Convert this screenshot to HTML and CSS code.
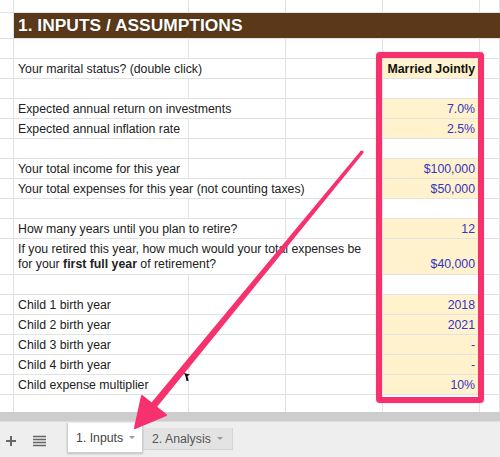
FILE: index.html
```html
<!DOCTYPE html>
<html>
<head>
<meta charset="utf-8">
<link rel="stylesheet" href="styles.css">
</head>
<body>
<div class="page">
  <div class="sheet">
    <div class="row r-top"><div class="c"></div><div class="c"></div><div class="c"></div><div class="c"></div><div class="c"></div><div class="c"></div></div>
    <div class="row r-head"><div class="c"></div><div class="c title">1. INPUTS / ASSUMPTIONS</div></div>

    <div class="row"><div class="c"></div><div class="c"></div><div class="c"></div><div class="c"></div><div class="c"></div><div class="c"></div></div>
    <div class="row"><div class="c"></div><div class="c lbl s2">Your marital status? (double click)</div><div class="c"></div><div class="c inp val bold">Married Jointly</div><div class="c"></div></div>
    <div class="row"><div class="c"></div><div class="c"></div><div class="c"></div><div class="c"></div><div class="c"></div><div class="c"></div></div>
    <div class="row"><div class="c"></div><div class="c lbl s2">Expected annual return on investments</div><div class="c"></div><div class="c inp val">7.0%</div><div class="c"></div></div>
    <div class="row"><div class="c"></div><div class="c lbl">Expected annual inflation rate</div><div class="c"></div><div class="c"></div><div class="c inp val">2.5%</div><div class="c"></div></div>
    <div class="row"><div class="c"></div><div class="c"></div><div class="c"></div><div class="c"></div><div class="c"></div><div class="c"></div></div>
    <div class="row"><div class="c"></div><div class="c lbl">Your total income for this year</div><div class="c"></div><div class="c"></div><div class="c inp val">$100,000</div><div class="c"></div></div>
    <div class="row"><div class="c"></div><div class="c lbl s3">Your total expenses for this year (not counting taxes)</div><div class="c inp val">$50,000</div><div class="c"></div></div>
    <div class="row"><div class="c"></div><div class="c"></div><div class="c"></div><div class="c"></div><div class="c"></div><div class="c"></div></div>
    <div class="row"><div class="c"></div><div class="c lbl s2">How many years until you plan to retire?</div><div class="c"></div><div class="c inp val">12</div><div class="c"></div></div>
    <div class="row r-tall"><div class="c"></div><div class="c lbl s3 wrap"><span class="lines">If you retired this year, how much would your total expenses be<br>for your <b>first full year</b> of retirement?</span></div><div class="c inp val bottom">$40,000</div><div class="c"></div></div>
    <div class="row"><div class="c"></div><div class="c"></div><div class="c"></div><div class="c"></div><div class="c"></div><div class="c"></div></div>
    <div class="row"><div class="c"></div><div class="c lbl">Child 1 birth year</div><div class="c"></div><div class="c"></div><div class="c inp val">2018</div><div class="c"></div></div>
    <div class="row"><div class="c"></div><div class="c lbl">Child 2 birth year</div><div class="c"></div><div class="c"></div><div class="c inp val">2021</div><div class="c"></div></div>
    <div class="row"><div class="c"></div><div class="c lbl">Child 3 birth year</div><div class="c"></div><div class="c"></div><div class="c inp val">-</div><div class="c"></div></div>
    <div class="row"><div class="c"></div><div class="c lbl">Child 4 birth year</div><div class="c"></div><div class="c"></div><div class="c inp val">-</div><div class="c"></div></div>
    <div class="row"><div class="c"></div><div class="c lbl">Child expense multiplier</div><div class="c"></div><div class="c"></div><div class="c inp val">10%</div><div class="c"></div></div>
    <div class="row r-part"><div class="c"></div><div class="c"></div><div class="c"></div><div class="c"></div><div class="c"></div><div class="c"></div></div>
  </div>

  <div class="hscroll"></div>

  <div class="tabbar">
    <div class="tool">
      <svg width="12" height="12" viewBox="0 0 12 12"><path d="M6 1v10M1 6h10" stroke="#666" stroke-width="2"/></svg>
    </div>
    <div class="tool menu">
      <svg width="13" height="12" viewBox="0 0 13 12"><path d="M0 1.5h13M0 4.5h13M0 7.5h13M0 10.5h13" stroke="#666" stroke-width="1.6"/></svg>
    </div>
    <div class="tab active"><span>1. Inputs</span><span class="caret"></span></div>
    <div class="tab other"><span>2. Analysis</span><span class="caret"></span></div>
  </div>

  <div class="highlight"></div>

  <svg class="overlay" width="500" height="457" viewBox="0 0 500 457">
    <polygon points="363.2,153.2 360.8,150.8 151.3,402.8 156.7,407.2" fill="#f7306e"/>
    <circle cx="362" cy="152" r="1.6" fill="#f7306e"/>
    <polygon points="135,428 142,396 166,415" fill="#f7306e" stroke="#f7306e" stroke-width="2" stroke-linejoin="round"/>
    <polygon points="184,373 190,374.5 187.5,376 188.5,381 186.5,381 185.5,376.5" fill="#111"/>
  </svg>
</div>
</body>
</html>
```

FILE: styles.css
```css
html, body {
  margin: 0;
  padding: 0;
  background: #fff;
}

.page {
  position: relative;
  width: 500px;
  height: 457px;
  overflow: hidden;
  font-family: "Liberation Sans", Arial, sans-serif;
  font-size: 12.3px;
  color: #222;
}

.sheet {
  display: flex;
  flex-direction: column;
}

.row {
  display: grid;
  grid-template-columns: 14px 175px 97px 97px 97px 20px;
  height: 20px;
}

.r-top { height: 13px; }
.r-head { height: 26px; }
.r-tall { height: 36px; }
.r-part { height: 17px; }
.r-part .c { border-bottom: none; }

.c {
  box-sizing: border-box;
  border-right: 1px solid #e2e2e2;
  border-bottom: 1px solid #e2e2e2;
  display: flex;
  align-items: center;
  padding: 0 4px;
  white-space: nowrap;
  overflow: hidden;
}

.title {
  grid-column: 2 / -1;
  background: #5a3818;
  border-right: none;
  color: #fff;
  font-weight: bold;
  font-size: 17.4px;
  padding-left: 4px;
  text-shadow: 0 0 1px rgba(0,0,0,0.5);
}

.s2 { grid-column: span 2; }
.s3 { grid-column: span 3; }

.wrap .lines {
  display: block;
  line-height: 15px;
  white-space: nowrap;
}

.inp { background: #fff2cc; }

.val {
  justify-content: flex-end;
  color: #3434c4;
}

.bold {
  font-weight: bold;
  color: #111;
}

.bottom {
  align-items: flex-end;
  padding-bottom: 3px;
}

.hscroll {
  height: 10px;
  background: #cdcdcd;
  border-bottom: 1px solid #dcdcdc;
  box-sizing: border-box;
}

.tabbar {
  height: 35px;
  background: #eeeeee;
  display: flex;
  align-items: flex-start;
  padding-left: 5px;
}

.tool {
  width: 12px;
  height: 12px;
  margin-top: 13px;
  display: flex;
}

.menu {
  margin-left: 16px;
  width: 13px;
}

.tab {
  display: flex;
  align-items: center;
  box-sizing: border-box;
  color: #444;
  font-size: 12.3px;
}

.active {
  margin-left: 21px;
  margin-top: 1px;
  width: 76px;
  height: 30px;
  padding-left: 8px;
  background: #fff;
  border: 1px solid #cfcfcf;
  border-top: none;
  box-shadow: 0 1px 2px rgba(0,0,0,0.2);
}

.other {
  margin-top: 6px;
  width: 90px;
  height: 22px;
  padding-left: 8px;
  background: #e3e3e3;
  border: 1px solid #d4d4d4;
  border-top: none;
  color: #555;
}

.caret {
  width: 0;
  height: 0;
  border-left: 3.5px solid transparent;
  border-right: 3.5px solid transparent;
  border-top: 3.5px solid #9a9a9a;
  margin-left: auto;
  margin-right: 7px;
}

.other .caret { margin-right: 9px; }

.highlight {
  position: absolute;
  left: 376px;
  top: 52px;
  width: 108px;
  height: 351px;
  box-sizing: border-box;
  border: 6px solid #f7306e;
  border-radius: 4px;
  box-shadow: 0 0 1px rgba(200,0,60,0.5);
}

.overlay {
  position: absolute;
  left: 0;
  top: 0;
  pointer-events: none;
}
```
